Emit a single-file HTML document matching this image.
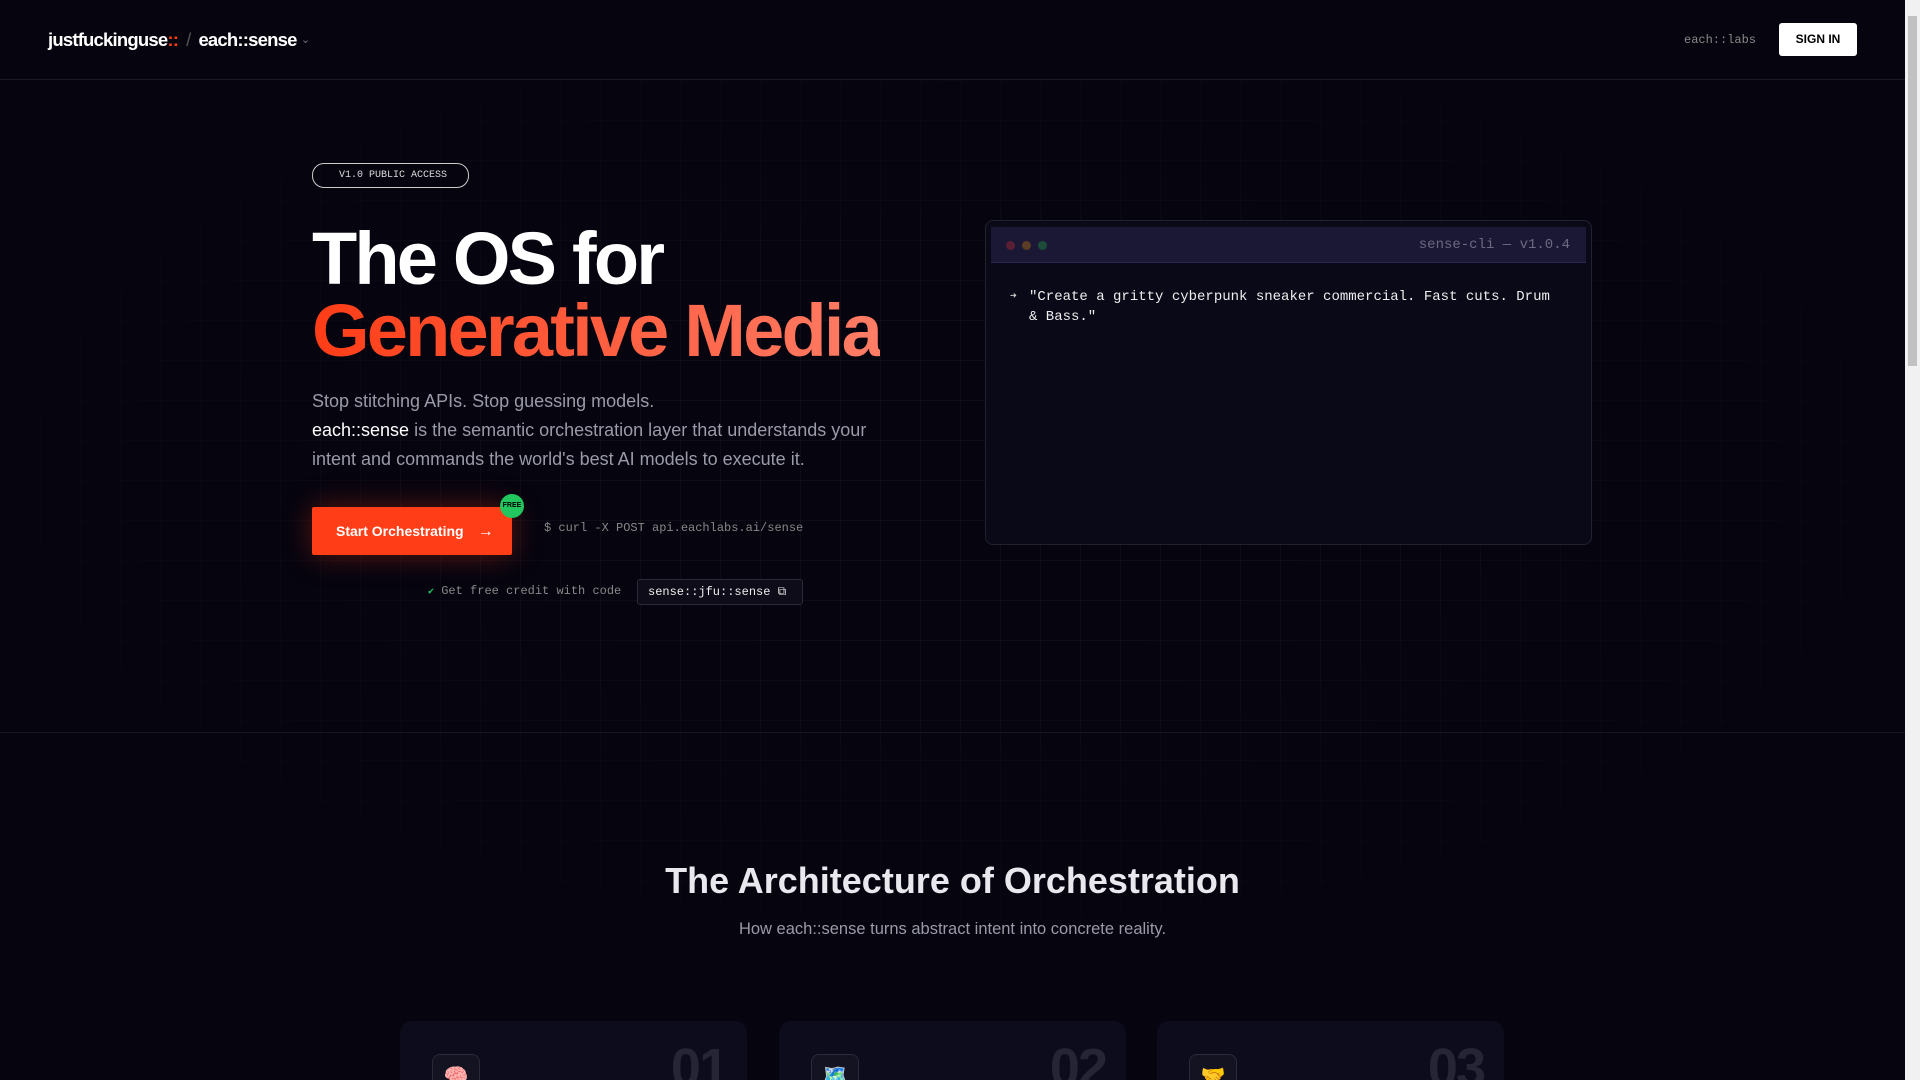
<!DOCTYPE html>
<html><head><meta charset="utf-8"><style>
*{box-sizing:border-box;margin:0;padding:0}
html,body{width:1920px;height:1080px;overflow:hidden}
body{background:#05040f;font-family:"Liberation Sans",sans-serif;color:#fff;position:relative}
.grid{position:absolute;left:0;top:80px;width:1905px;height:1000px;background-image:linear-gradient(rgba(255,255,255,.035) 1px,transparent 1px),linear-gradient(90deg,rgba(255,255,255,.035) 1px,transparent 1px);background-size:40px 40px;-webkit-mask-image:radial-gradient(ellipse 60% 55% at 50% 40%,#000 30%,transparent 100%)}
.nav{position:absolute;left:0;top:0;width:1905px;height:80px;border-bottom:1px solid #1a1a26;background:#05040f}
.logo{position:absolute;left:48px;top:29px;font-size:18.5px;font-weight:bold;letter-spacing:-0.8px}
.logo .r{color:#ff3d17}.logo .s{color:#555;font-weight:normal;margin:0 8px}
.logo .c{color:#777;font-size:11px;font-weight:normal;position:relative;top:-3px}
.labs{position:absolute;left:1684px;top:33px;font:12px "Liberation Mono",monospace;color:#888}
.sign{position:absolute;left:1779px;top:23px;width:78px;height:33px;background:#fff;color:#000;border-radius:3px;font-size:12px;font-weight:bold;text-align:center;line-height:33px}
.sb{position:absolute;right:0;top:0;width:15px;height:1080px;background:#f1f1f1}
.sb i{position:absolute;left:3px;top:16px;width:9px;height:350px;background:#c1c1c1}
.badge{position:absolute;left:312px;top:163px;width:157px;height:25px;border:1px solid #ccc;border-radius:12px;font:10px "Liberation Mono",monospace;color:#ddd;line-height:23px;padding-left:26px}
h1{position:absolute;left:312px;top:223px;font-size:74px;line-height:72px;letter-spacing:-2.8px;font-weight:bold}
h1 span{background:linear-gradient(90deg,#ff3d17,#ff7d66);-webkit-background-clip:text;color:transparent}
.p{position:absolute;left:312px;top:387px;width:600px;font-size:18px;line-height:29px;color:#9a9aa8}
.p b{color:#fff;font-weight:normal}
.btn{position:absolute;left:312px;top:507px;width:200px;height:48px;background:#ff3d17;border-radius:2px;font-size:14px;font-weight:bold;line-height:48px;padding-left:24px;box-shadow:0 0 30px rgba(255,61,23,.35)}
.btn em{font-style:normal;margin-left:14px;font-size:16px}
.free{position:absolute;left:500px;top:494px;width:24px;height:24px;border-radius:50%;background:#22c55e;color:#000;font-size:7px;font-weight:bold;text-align:center;line-height:24px}
.curl{position:absolute;left:544px;top:521px;font:12px "Liberation Mono",monospace;color:#888}
.cred{position:absolute;left:428px;top:584px;font:12px "Liberation Mono",monospace;color:#888}
.cred .k{color:#22c55e;font-size:10px}
.code{position:absolute;left:637px;top:579px;width:166px;height:26px;border:1px solid #2a2a38;background:#0d0c18;border-radius:3px;font:12px "Liberation Mono",monospace;color:#eee;line-height:24px;padding-left:10px}
.term{position:absolute;left:985px;top:220px;width:607px;height:325px;border:1px solid #22222e;border-radius:8px;background:#0a0917}
.th{position:absolute;left:5px;top:6px;right:5px;height:36px;background:#1b1836;border-bottom:1px solid #2a2850}
.d{position:absolute;top:14px;width:9px;height:9px;border-radius:50%}
.tt{position:absolute;right:16px;top:10px;font:14px "Liberation Mono",monospace;color:#6a6a80}
.tx{position:absolute;left:24px;top:66px;font:14px/20px "Liberation Mono",monospace;color:#eee;width:540px}
.tx .a{position:absolute;left:0;font-size:11px;color:#ccc}
.tx div{padding-left:19px}
.sep{position:absolute;left:0;top:732px;width:1905px;height:1px;background:#161622}
h2{position:absolute;left:0;width:1905px;top:860px;text-align:center;font-size:36px;color:#e8e8ee}
.sub{position:absolute;left:0;width:1905px;top:920px;text-align:center;font-size:16.5px;color:#9a9aa8}
.card{position:absolute;top:1021px;width:347px;height:59px;background:#0d0c1c;border-radius:12px 12px 0 0;overflow:hidden}
.n{position:absolute;right:20px;top:16px;font-size:54px;font-weight:bold;color:#262536;letter-spacing:-2px}
.ic{position:absolute;left:32px;top:33px;width:48px;height:40px;border:1px solid #2a2a3a;border-radius:8px;background:#141322;text-align:center;font-size:20px;padding-top:8px}
</style></head><body>
<div class="grid"></div>
<div class="nav">
<div class="logo">justfuckinguse<span class="r">::</span><span class="s">/</span>each::sense <span class="c">⌄</span></div>
<div class="labs">each::labs</div>
<div class="sign">SIGN IN</div>
</div>
<div class="badge">V1.0 PUBLIC ACCESS</div>
<h1>The OS for<br><span>Generative Media</span></h1>
<div class="p">Stop stitching APIs. Stop guessing models.<br><b>each::sense</b> is the semantic orchestration layer that understands your intent and commands the world's best AI models to execute it.</div>
<div class="btn">Start Orchestrating<em>→</em></div>
<div class="free">FREE</div>
<div class="curl">$ curl -X POST api.eachlabs.ai/sense</div>
<div class="cred"><span class="k">✔</span> Get free credit with code</div>
<div class="code">sense::jfu::sense ⧉</div>
<div class="term"><div class="th"><i class="d" style="left:15px;background:#5a1f35"></i><i class="d" style="left:31px;background:#5a3d22"></i><i class="d" style="left:47px;background:#1d4d3a"></i><div class="tt">sense-cli — v1.0.4</div></div>
<div class="tx"><span class="a">➜</span><div>"Create a gritty cyberpunk sneaker commercial. Fast cuts. Drum &amp; Bass."</div></div></div>
<div class="sep"></div>
<h2>The Architecture of Orchestration</h2>
<div class="sub">How each::sense turns abstract intent into concrete reality.</div>
<div class="card" style="left:400px"><div class="ic">🧠</div><div class="n">01</div></div>
<div class="card" style="left:779px"><div class="ic">🗺️</div><div class="n">02</div></div>
<div class="card" style="left:1157px"><div class="ic">🤝</div><div class="n">03</div></div>
<div class="sb"><i></i></div>
</body></html>
